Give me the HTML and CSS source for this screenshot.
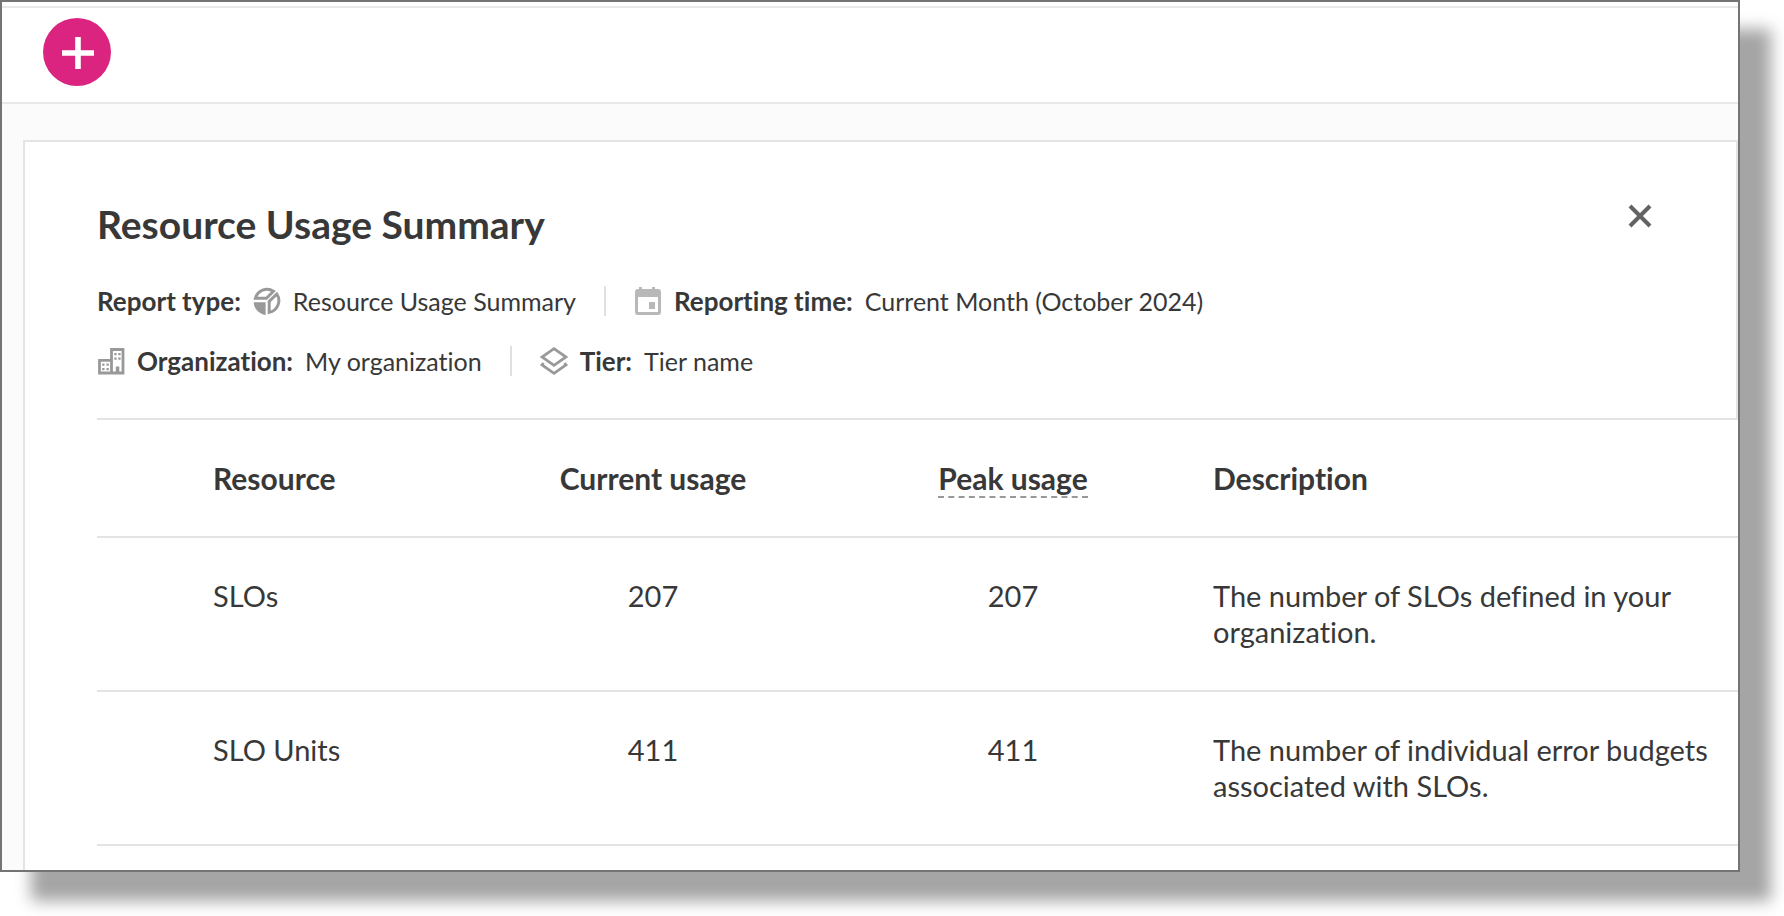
FILE: index.html
```html
<!DOCTYPE html>
<html lang="en">
<head>
<meta charset="utf-8">
<title>Resource Usage Summary</title>
<link rel="stylesheet" href="styles.css">
</head>
<body>
<div class="window">
  <header class="topbar">
    <button class="add-button" type="button" aria-label="Add">
      <svg class="add-icon" viewBox="0 0 34 34" aria-hidden="true"><path d="M18 2v32M2 18h32" fill="none" stroke="#fff" stroke-width="5.6"/></svg>
    </button>
  </header>
  <main class="page">
    <section class="panel">
      <div class="report-head">
        <div class="title-row">
          <h1 class="title">Resource Usage Summary</h1>
          <button class="close-button" type="button" aria-label="Close">
            <svg class="close-icon" viewBox="0 0 24 24" aria-hidden="true"><path d="M2 2l20 20M22 2L2 22" fill="none" stroke="#636363" stroke-width="4"/></svg>
          </button>
        </div>
        <div class="meta">
          <div class="meta-item">
            <span class="label">Report type:</span>
            <svg class="icon" viewBox="0 0 28 28" aria-hidden="true"><g fill="none" stroke="#999" stroke-width="3"><path d="M2.400 11.300A12 12 0 0 1 20.500 4.200L13.400 11.300Z"/><path d="M23.800 7A12 12 0 0 1 16.200 25.400V14.400Z"/></g><path d="M0.600 15.200H12.600V28A13.600 13.600 0 0 1 0.600 15.200Z" fill="#999"/></svg>
            <span>Resource Usage Summary</span>
          </div>
          <div class="meta-item">
            <svg class="icon" viewBox="0 0 28 28" aria-hidden="true"><path fill="#b8b8b8" fill-rule="evenodd" d="M5 0h3v2h10V0h3v2H24q3 0 3 3v20q0 3-3 3H4q-3 0-3-3V5q0-3 3-3h1zM4 10v15h20V10zM15 15h6v7h-6z"/></svg>
            <span class="label">Reporting time:</span>
            <span>Current Month (October 2024)</span>
          </div>
        </div>
        <div class="meta">
          <div class="meta-item">
            <svg class="icon" viewBox="0 0 28 28" aria-hidden="true"><path fill="none" stroke="#999" stroke-width="2.800" d="M14.500 26V2.500H26V26H2.500V13.300H14.500"/><path fill="#999" d="M17.300 6h2.300v2.300h-2.300zM21.300 6h2.300v2.300h-2.300zM17.300 10.500h2.300v2.300h-2.300zM21.300 10.500h2.300v2.300h-2.300zM5.200 16.500h2.300v2.300H5.200zM9.500 16.500h2.300v2.300H9.500zM5.200 21h2.300v2.300H5.200zM9.500 21h2.300v2.300H9.500zM18.800 19.500h3.500V27h-3.500z"/></svg>
            <span class="label">Organization:</span>
            <span>My organization</span>
          </div>
          <div class="meta-item">
            <svg class="icon" viewBox="0 0 28 28" aria-hidden="true"><g fill="none" stroke="#999" stroke-width="2.800"><path d="M14 1.700L26 10L14 18.300L2 10Z"/><path d="M3.500 16L2 18L14 26.300L26 18L24.500 16"/></g></svg>
            <span class="label">Tier:</span>
            <span>Tier name</span>
          </div>
        </div>
      </div>
      <div class="table-wrap">
        <table class="usage">
          <colgroup><col class="col-lead"><col class="col-name"><col class="col-num"><col class="col-num"><col></colgroup>
          <thead>
            <tr><td></td><th scope="col">Resource</th><th class="num" scope="col">Current usage</th><th class="num" scope="col"><span class="hint">Peak usage</span></th><th class="desc" scope="col">Description</th></tr>
          </thead>
          <tbody>
            <tr><td></td><td>SLOs</td><td class="num">207</td><td class="num">207</td><td class="desc">The number of SLOs defined in your organization.</td></tr>
            <tr><td></td><td>SLO Units</td><td class="num">411</td><td class="num">411</td><td class="desc">The number of individual error budgets associated with SLOs.</td></tr>
          </tbody>
        </table>
      </div>
    </section>
  </main>
</div>
</body>
</html>
```
FILE: styles.css
```css
* {
  box-sizing: border-box;
}

body {
  margin: 0;
  padding: 0 44px 44px 0;
  background: #fff;
  color: #383838;
  font-family: Lato, "Open Sans", sans-serif;
  font-variant-ligatures: none;
  overflow: hidden;
}

.window {
  border: 2px solid #747474;
  background: #fff;
  box-shadow: 31px 29px 15px #a5a5a5;
}

.topbar {
  margin-top: 4px;
  padding: 10px 41px 16px;
  border: solid #e8e8e8;
  border-width: 2px 0;
}

.add-button {
  display: grid;
  place-items: center;
  width: 68px;
  height: 68px;
  padding: 0;
  border: 0;
  border-radius: 50%;
  background: #da247f;
}

.add-icon {
  width: 34px;
  height: 34px;
}

.page {
  padding: 36px 0 0 21px;
  background: #fbfbfb;
}

.panel {
  border: solid #e4e4e4;
  border-width: 2px 0 0 2px;
  background: #fff;
}

.report-head {
  padding: 60px 84px 42px 72px;
  border-right: 2px solid #e4e4e4;
}

.title-row {
  display: flex;
  justify-content: space-between;
  align-items: flex-start;
}

.title {
  margin: 0;
  font-size: 39px;
  line-height: 44px;
  font-weight: 700;
}

.close-button {
  padding: 2px 0;
  border: 0;
  background: none;
}

.close-icon {
  display: block;
  width: 24px;
  height: 24px;
}

.meta {
  display: flex;
  margin-top: 30px;
  font-size: 25px;
  line-height: 30px;
}

.title-row + .meta {
  margin-top: 40px;
}

.meta-item {
  display: flex;
  align-items: center;
  gap: 12px;
}

.meta-item + .meta-item {
  margin-left: 28px;
  padding-left: 28px;
  border-left: 2px solid #e0e0e0;
}

.label {
  font-size: 26px;
  font-weight: 700;
}

.icon {
  width: 28px;
  height: 28px;
}

.table-wrap {
  padding: 0 0 24px 72px;
}

.usage {
  width: 100%;
  border-collapse: separate;
  border-spacing: 0;
  table-layout: fixed;
  border-top: 2px solid #e4e4e4;
  font-size: 29px;
  line-height: 36px;
}

.col-lead {
  width: 116px;
}

.col-name {
  width: 260px;
}

.col-num {
  width: 360px;
}

.usage th,
.usage td {
  padding: 40px 0;
  border-bottom: 2px solid #e4e4e4;
  text-align: left;
  vertical-align: top;
}

.usage th {
  font-size: 30px;
}

.usage .num {
  text-align: center;
}

.usage .desc {
  padding-left: 20px;
}

.hint {
  border-bottom: 2px dashed #999;
}
```
